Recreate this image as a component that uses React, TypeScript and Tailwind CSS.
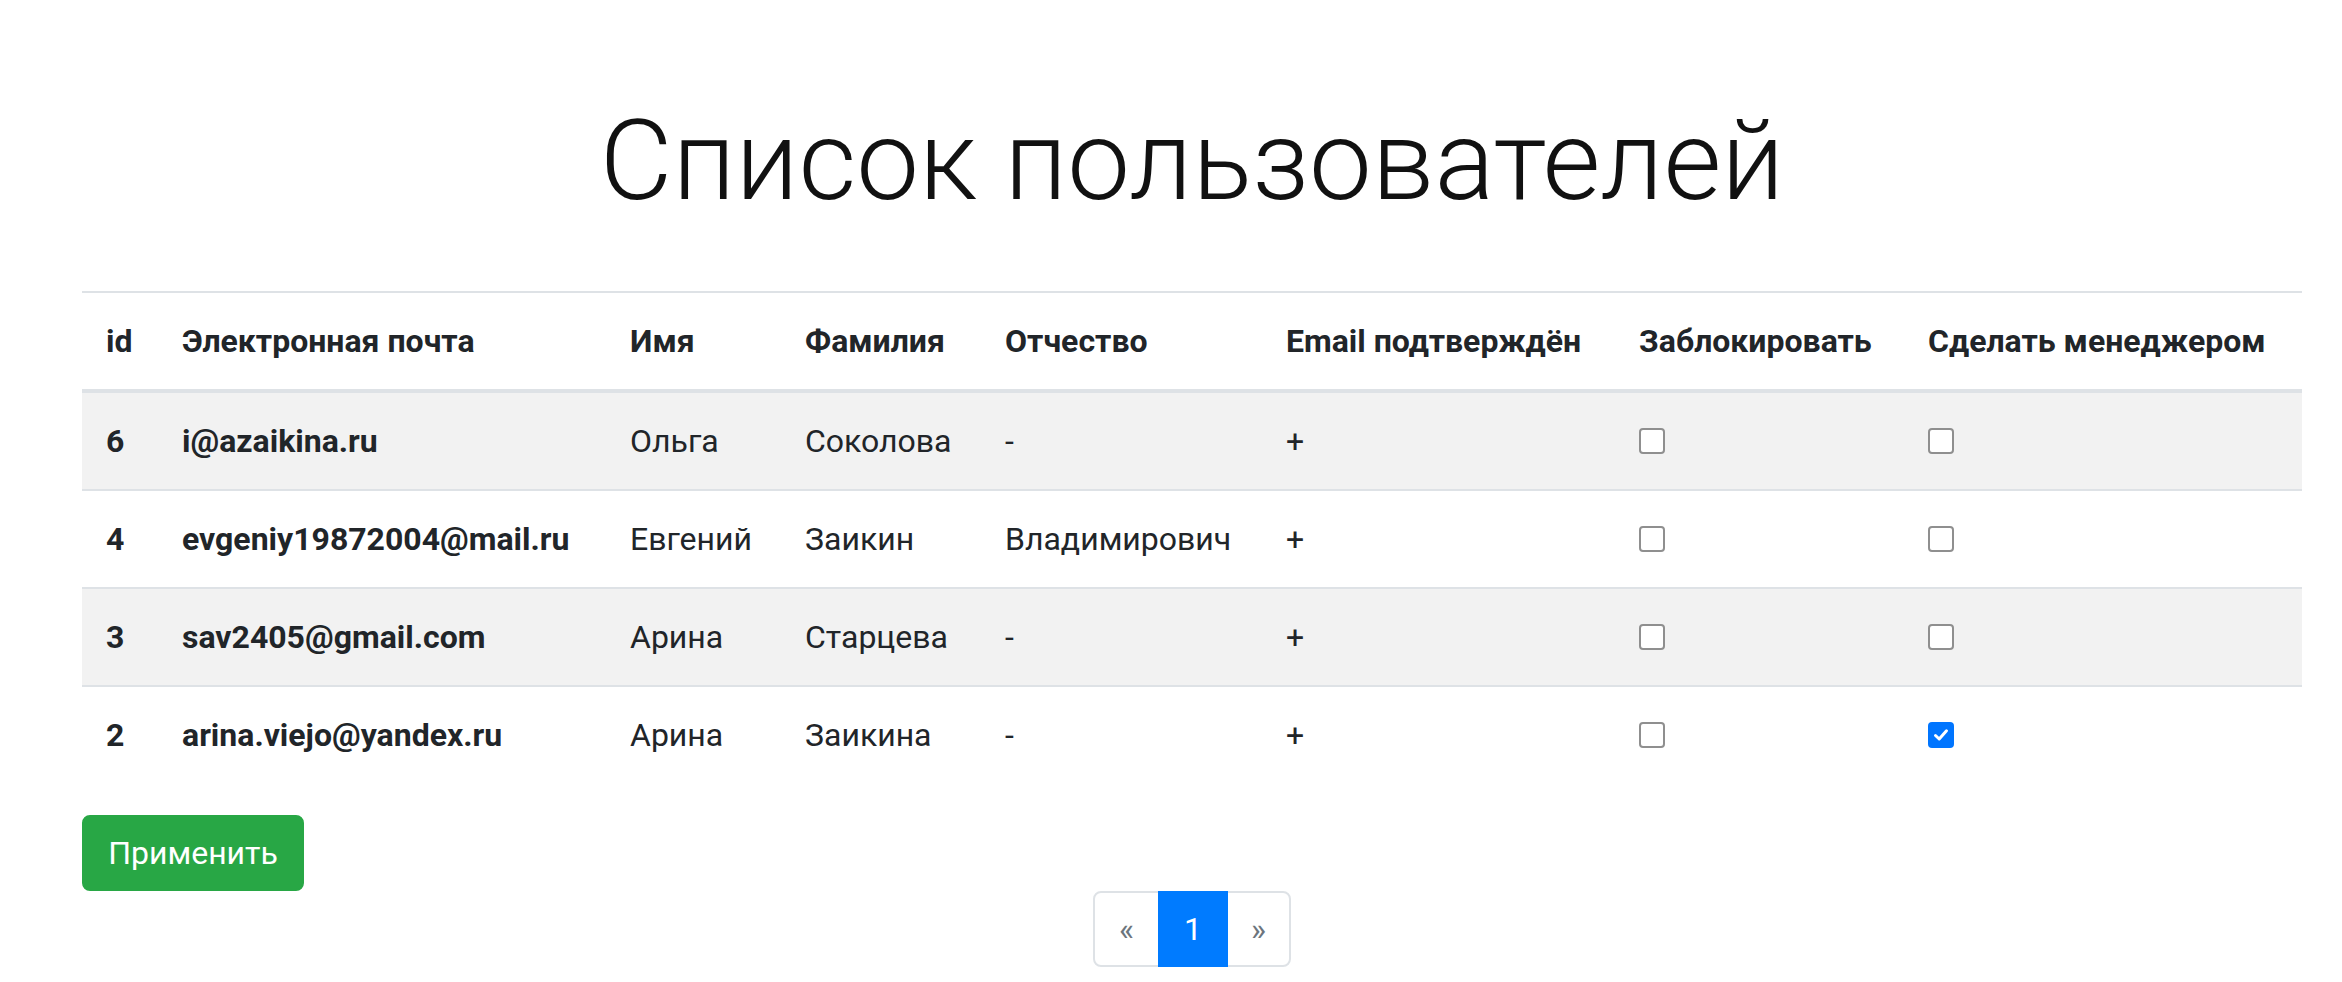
import React from "react";

type Row = {
  id: string;
  email: string;
  name: string;
  surname: string;
  patronymic: string;
  confirmed: string;
  blocked: boolean;
  manager: boolean;
};

const rows: Row[] = [
  { id: "6", email: "i@azaikina.ru", name: "Ольга", surname: "Соколова", patronymic: "-", confirmed: "+", blocked: false, manager: false },
  { id: "4", email: "evgeniy19872004@mail.ru", name: "Евгений", surname: "Заикин", patronymic: "Владимирович", confirmed: "+", blocked: false, manager: false },
  { id: "3", email: "sav2405@gmail.com", name: "Арина", surname: "Старцева", patronymic: "-", confirmed: "+", blocked: false, manager: false },
  { id: "2", email: "arina.viejo@yandex.ru", name: "Арина", surname: "Заикина", patronymic: "-", confirmed: "+", blocked: false, manager: true },
];

const headers = [
  "id",
  "Электронная почта",
  "Имя",
  "Фамилия",
  "Отчество",
  "Email подтверждён",
  "Заблокировать",
  "Сделать менеджером",
];

function Checkbox({ checked }: { checked: boolean }) {
  if (checked) {
    return (
      <span className="inline-flex w-[26px] h-[26px] rounded-[4px] bg-[#0075ff] items-center justify-center">
        <svg width="18" height="18" viewBox="0 0 18 18" fill="none">
          <path d="M3.5 9.5 L7.2 13 L14.5 4.8" stroke="white" strokeWidth="3" strokeLinecap="round" strokeLinejoin="round" />
        </svg>
      </span>
    );
  }
  return <span className="inline-block w-[26px] h-[26px] rounded-[4px] border-2 border-[#8f8f8f] bg-white" />;
}

const grid =
  "grid grid-cols-[76px_448px_175px_200px_281px_353px_289px_398px]";

export default function App() {
  return (
    <div
      className="min-h-screen bg-white text-[#212529] pl-[82px] pr-[40px]"
      style={{ fontFamily: "Roboto, 'Noto Sans', sans-serif" }}
    >
      <h1 className="pt-[94px] mb-[63px] text-center text-[112px] font-light leading-[1.2] text-[#111]">
        Список пользователей
      </h1>

      <div className="w-[2220px]">
        <div className={`${grid} border-t-2 border-b-4 border-[#dee2e6] text-[32px] leading-[48px] font-bold`}>
          {headers.map((h) => (
            <div key={h} className="px-6 py-6 whitespace-nowrap">
              {h}
            </div>
          ))}
        </div>
        {rows.map((r, i) => (
          <div
            key={r.id}
            className={`${grid} text-[32px] leading-[48px] ${i > 0 ? "border-t-2 border-[#dee2e6]" : ""} ${i % 2 === 0 ? "bg-[#f2f2f2]" : "bg-white"}`}
          >
            <div className="px-6 py-6 font-bold">{r.id}</div>
            <div className="px-6 py-6 font-bold whitespace-nowrap">{r.email}</div>
            <div className="px-6 py-6">{r.name}</div>
            <div className="px-6 py-6">{r.surname}</div>
            <div className="px-6 py-6">{r.patronymic}</div>
            <div className="px-6 py-6">{r.confirmed}</div>
            <div className="px-6 py-6 flex items-center">
              <Checkbox checked={r.blocked} />
            </div>
            <div className="px-6 py-6 flex items-center">
              <Checkbox checked={r.manager} />
            </div>
          </div>
        ))}

        <div className="mt-8">
          <button className="h-[76px] w-[222px] rounded-[8px] bg-[#28a745] border-2 border-[#28a745] text-white text-[32px] leading-[48px]">
            Применить
          </button>
        </div>

        <div className="flex justify-center">
          <div className="flex text-[32px] leading-[40px]">
            <span className="w-[67px] h-[76px] flex items-center justify-center border-2 border-[#dee2e6] rounded-l-[8px] text-[#6c757d] bg-white">
              «
            </span>
            <span className="relative z-10 -ml-[2px] w-[70px] h-[76px] flex items-center justify-center border-2 border-[#007bff] bg-[#007bff] text-white">
              1
            </span>
            <span className="-ml-[2px] w-[65px] h-[76px] flex items-center justify-center border-2 border-[#dee2e6] rounded-r-[8px] text-[#6c757d] bg-white">
              »
            </span>
          </div>
        </div>
      </div>
    </div>
  );
}
